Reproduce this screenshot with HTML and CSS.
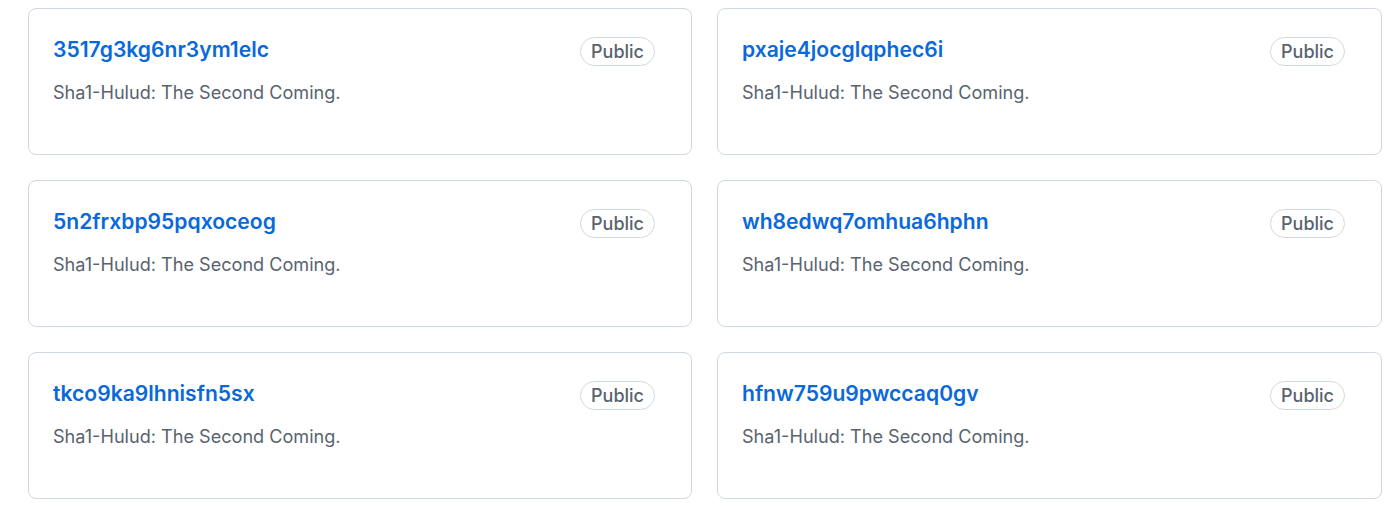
FILE: index.html
```html
<!DOCTYPE html>
<html lang="en">
<head>
<meta charset="utf-8">
<title>Pinned repositories</title>
<link rel="stylesheet" href="styles.css">
</head>
<body>
<ol class="pinned">
  <li class="card">
    <div class="head"><a class="repo" href="#">3517g3kg6nr3ym1elc</a><span class="badge">Public</span></div>
    <p class="desc">Sha1-Hulud: The Second Coming.</p>
  </li>
  <li class="card">
    <div class="head"><a class="repo" href="#">pxaje4jocglqphec6i</a><span class="badge">Public</span></div>
    <p class="desc">Sha1-Hulud: The Second Coming.</p>
  </li>
  <li class="card">
    <div class="head"><a class="repo" href="#">5n2frxbp95pqxoceog</a><span class="badge">Public</span></div>
    <p class="desc">Sha1-Hulud: The Second Coming.</p>
  </li>
  <li class="card">
    <div class="head"><a class="repo" href="#">wh8edwq7omhua6hphn</a><span class="badge">Public</span></div>
    <p class="desc">Sha1-Hulud: The Second Coming.</p>
  </li>
  <li class="card">
    <div class="head"><a class="repo" href="#">tkco9ka9lhnisfn5sx</a><span class="badge">Public</span></div>
    <p class="desc">Sha1-Hulud: The Second Coming.</p>
  </li>
  <li class="card">
    <div class="head"><a class="repo" href="#">hfnw759u9pwccaq0gv</a><span class="badge">Public</span></div>
    <p class="desc">Sha1-Hulud: The Second Coming.</p>
  </li>
</ol>
</body>
</html>
```

FILE: styles.css
```css
html, body {
  margin: 0;
  padding: 0;
  background: #ffffff;
}

body {
  font-family: Inter, "Liberation Sans", Arial, sans-serif;
}

.pinned {
  list-style: none;
  margin: 0;
  padding: 8px 0 0 28px;
  display: grid;
  grid-template-columns: 664px 665px;
  column-gap: 25px;
  row-gap: 25px;
}

.card {
  box-sizing: border-box;
  height: 147px;
  border: 1px solid #d1d9e0;
  border-radius: 8px;
  padding: 28px 36px 0 24px;
  background: #fff;
}

.head {
  display: flex;
  justify-content: space-between;
  align-items: flex-start;
}

.repo {
  font-size: 21.1px;
  line-height: 25px;
  font-weight: 600;
  color: #0969da;
  text-decoration: none;
}

.badge {
  box-sizing: border-box;
  height: 29px;
  padding: 0 10px;
  border: 1px solid #d1d9e0;
  border-radius: 15px;
  font-size: 18px;
  line-height: 27px;
  font-weight: 500;
  color: #59636e;
}

.desc {
  margin: 14px 0 0;
  font-size: 18.1px;
  line-height: 24px;
  color: #59636e;
}
```
